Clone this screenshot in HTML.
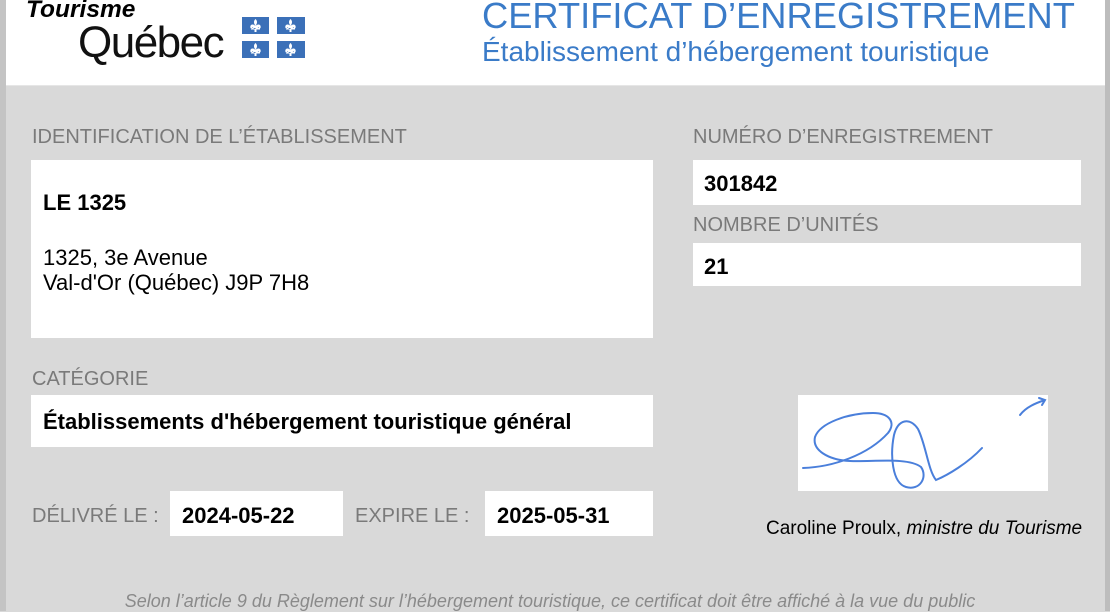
<!DOCTYPE html>
<html><head><meta charset="utf-8"><style>
*{margin:0;padding:0;box-sizing:border-box}
body{width:1110px;height:611px;overflow:hidden;background:#d9d9d9;font-family:"Liberation Sans",Arial,sans-serif;position:relative}
.lb{position:absolute;left:0;top:0;width:6px;height:611px;background:#c4c4c4}
.rb{position:absolute;right:0;top:0;width:5px;height:611px;background:#bdbdbd}
.hdr{position:absolute;left:6px;top:0;width:1099px;height:86px;background:#fff;border-bottom:1px solid #e6e6e6}
.abs{position:absolute;white-space:nowrap}
.lbl{position:absolute;color:#7a7a7a;font-size:20px;white-space:nowrap}
.box{position:absolute;background:#fff;color:#000}
.b{font-weight:bold;font-size:22px}
</style></head><body>
<div class="lb"></div><div class="rb"></div>
<div class="hdr"></div>
<div class="abs" style="left:26px;top:-4px;font-size:24.5px;font-weight:bold;font-style:italic;color:#000">Tourisme</div>
<div class="abs" style="left:78px;top:18px;font-size:44px;color:#111;letter-spacing:-1.5px">Québec</div>
<svg class="abs" style="left:242px;top:17px" width="63" height="42" viewBox="0 0 63 42">
<g fill="#3b70b8"><rect x="0" y="0" width="27" height="17"/><rect x="35" y="0" width="28" height="17"/><rect x="0" y="24" width="27" height="17"/><rect x="35" y="24" width="28" height="17"/></g>
<g fill="#fff">
<path id="f" d="M13.5 2c-2 2-2 4 0 7 2-3 2-5 0-7zM13.5 9c-3-3-6-1-5 2 1 1 2 0 2-1 1 1 1 2 3 2zM13.5 9c3-3 6-1 5 2-1 1-2 0-2-1-1 1-1 2-3 2zM9 11h9v1.5H9zM12.5 12h2v3h-2z"/>
<use href="#f" x="35"/><use href="#f" y="24"/><use href="#f" x="35" y="24"/>
</g></svg>
<div class="abs" style="left:482px;top:-5px;font-size:36.3px;color:#3a7bc8">CERTIFICAT D’ENREGISTREMENT</div>
<div class="abs" style="left:482px;top:36px;font-size:28px;color:#3a7bc8">Établissement d’hébergement touristique</div>

<div class="lbl" style="left:32px;top:126px">IDENTIFICATION DE L’ÉTABLISSEMENT</div>
<div class="box" style="left:31px;top:160px;width:622px;height:178px">
<div class="abs b" style="left:12px;top:30px">LE 1325</div>
<div class="abs" style="left:12px;top:85px;font-size:22px;line-height:25px">1325, 3e Avenue<br>Val-d'Or (Québec) J9P 7H8</div></div>

<div class="lbl" style="left:693px;top:126px">NUMÉRO D’ENREGISTREMENT</div>
<div class="box" style="left:693px;top:160px;width:388px;height:45px"><div class="abs b" style="left:11px;top:11px">301842</div></div>
<div class="lbl" style="left:693px;top:214px">NOMBRE D’UNITÉS</div>
<div class="box" style="left:693px;top:243px;width:388px;height:43px"><div class="abs b" style="left:11px;top:11px">21</div></div>

<div class="lbl" style="left:32px;top:368px">CATÉGORIE</div>
<div class="box" style="left:31px;top:395px;width:622px;height:52px"><div class="abs b" style="left:12px;top:14px">Établissements d'hébergement touristique général</div></div>

<div class="lbl" style="left:32px;top:505px">DÉLIVRÉ LE :</div>
<div class="box" style="left:170px;top:491px;width:173px;height:45px"><div class="abs b" style="left:12px;top:12px">2024-05-22</div></div>
<div class="lbl" style="left:355px;top:505px">EXPIRE LE :</div>
<div class="box" style="left:485px;top:491px;width:168px;height:45px"><div class="abs b" style="left:12px;top:12px">2025-05-31</div></div>

<div class="box" style="left:798px;top:395px;width:250px;height:96px"></div>
<svg class="abs" style="left:798px;top:395px" width="250" height="96" viewBox="0 0 250 96">
<g fill="none" stroke="#4a7fdb" stroke-width="2" stroke-linecap="round">
<path d="M5 73C35 72 70 60 90 38 98 28 92 18 75 18 50 18 22 28 17 42 14 55 30 65 52 66 75 67 110 62 123 72 130 82 122 96 108 92 94 88 92 60 96 40 100 24 112 22 120 34 128 50 130 75 138 85 150 80 170 68 184 53"/>
<path d="M222 20C228 12 238 8 247 5M241 3L247 5 244 10"/>
</g></svg>
<div class="abs" style="left:766px;top:518px;font-size:19px;color:#000">Caroline Proulx, <i>ministre du Tourisme</i></div>

<div class="abs" style="left:0;width:1100px;text-align:center;top:591px;font-size:18px;font-style:italic;color:#8a8a8a">Selon l’article 9 du Règlement sur l’hébergement touristique, ce certificat doit être affiché à la vue du public</div>
</body></html>
